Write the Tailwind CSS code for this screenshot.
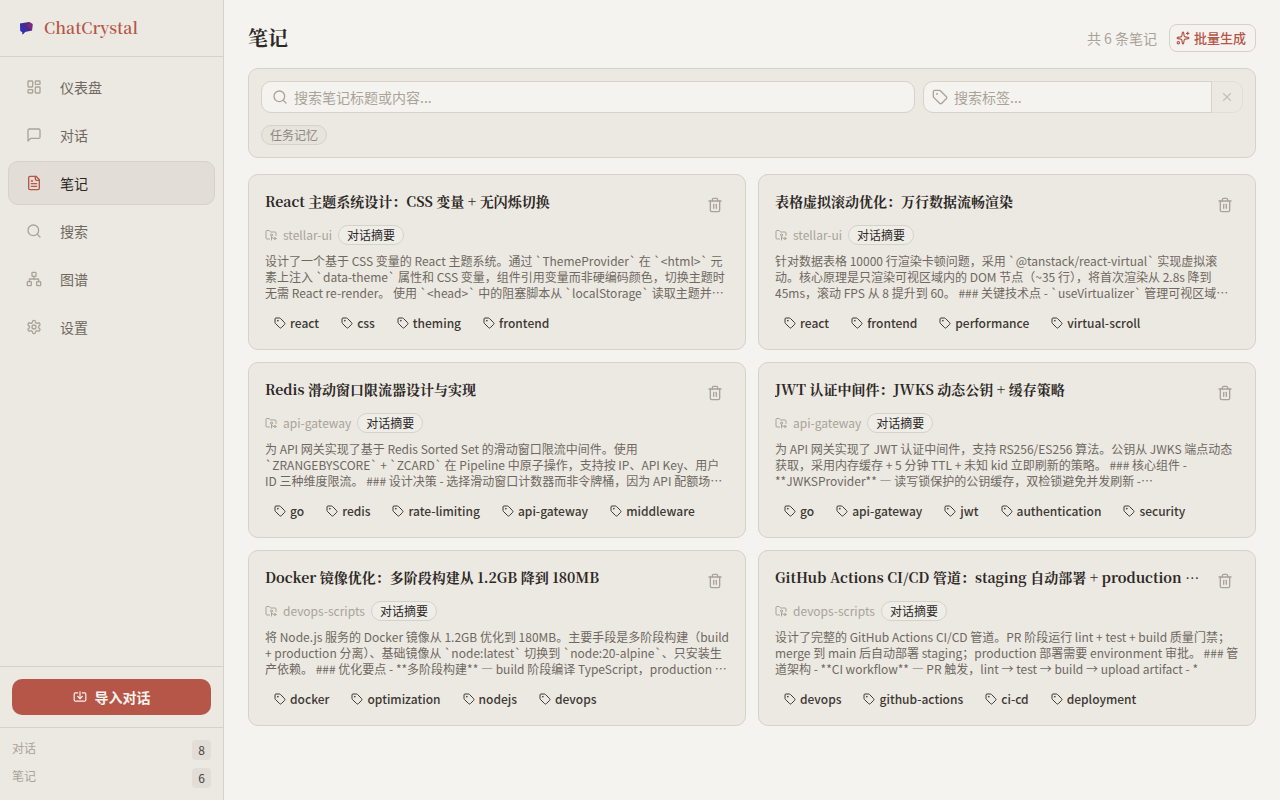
<!DOCTYPE html>
<html lang="zh-CN">
<head>
    <meta charset="UTF-8">
    <title>ChatCrystal</title>
    <script src="https://cdn.jsdelivr.net/npm/@tailwindcss/browser@4"></script>
</head>
<body class="bg-[#f5f3ef] text-[#2c2825] font-['Noto_Sans_CJK_SC','Noto_Sans',sans-serif]">
    <div class="flex h-[800px] w-[1280px] overflow-hidden">
        <!-- Sidebar -->
        <aside class="flex w-[224px] shrink-0 flex-col border-r border-[#d6d1c9] bg-[#ece9e3]">
            <div class="flex h-[57px] shrink-0 items-center gap-[10px] border-b border-[#d6d1c9] px-[18px]">
                <svg class="h-[16px] w-[16px]" viewBox="0 0 16 16">
                    <path d="M2 3.5 L11 2 L14.5 4 L14 10.5 L7 12 L4.5 14.5 L4.5 12 L2.5 11 Z" fill="#4a2a8c"/>
                    <path d="M2 3.5 L2.5 11 L4.5 12 L4.5 14.5 L7 12 L6.5 7 Z" fill="#2f2fb8"/>
                    <path d="M11 2 L14.5 4 L14 10.5 L9 6 Z" fill="#7a2a78"/>
                </svg>
                <span class="font-['Noto_Serif_CJK_SC','Liberation_Serif',serif] text-[16px] font-semibold text-[#b55648]">ChatCrystal</span>
            </div>
            <nav class="flex flex-1 flex-col gap-[4px] p-[8px]">
                <a class="flex h-[44px] items-center gap-[18px] rounded-[10px] border border-transparent px-[17px] text-[14px] text-[#6f6860]">
                    <svg class="h-[16px] w-[16px] text-[#a9a399]" viewBox="0 0 24 24" fill="none" stroke="currentColor" stroke-width="2" stroke-linecap="round" stroke-linejoin="round"><rect width="7" height="9" x="3" y="3" rx="1"/><rect width="7" height="5" x="14" y="3" rx="1"/><rect width="7" height="9" x="14" y="12" rx="1"/><rect width="7" height="5" x="3" y="16" rx="1"/></svg>
                    仪表盘
                </a>
                <a class="flex h-[44px] items-center gap-[18px] rounded-[10px] border border-transparent px-[17px] text-[14px] text-[#6f6860]">
                    <svg class="h-[16px] w-[16px] text-[#a9a399]" viewBox="0 0 24 24" fill="none" stroke="currentColor" stroke-width="2" stroke-linecap="round" stroke-linejoin="round"><path d="M21 15a2 2 0 0 1-2 2H7l-4 4V5a2 2 0 0 1 2-2h14a2 2 0 0 1 2 2z"/></svg>
                    对话
                </a>
                <a class="flex h-[44px] items-center gap-[18px] rounded-[10px] border border-[#d6d1c9] bg-[#e2ded7] px-[17px] text-[14px] text-[#2c2825]">
                    <svg class="h-[16px] w-[16px] text-[#b55648]" viewBox="0 0 24 24" fill="none" stroke="currentColor" stroke-width="2" stroke-linecap="round" stroke-linejoin="round"><path d="M15 2H6a2 2 0 0 0-2 2v16a2 2 0 0 0 2 2h12a2 2 0 0 0 2-2V7Z"/><path d="M14 2v4a2 2 0 0 0 2 2h4"/><path d="M10 9H8"/><path d="M16 13H8"/><path d="M16 17H8"/></svg>
                    笔记
                </a>
                <a class="flex h-[44px] items-center gap-[18px] rounded-[10px] border border-transparent px-[17px] text-[14px] text-[#6f6860]">
                    <svg class="h-[16px] w-[16px] text-[#a9a399]" viewBox="0 0 24 24" fill="none" stroke="currentColor" stroke-width="2" stroke-linecap="round" stroke-linejoin="round"><circle cx="11" cy="11" r="8"/><path d="m21 21-4.3-4.3"/></svg>
                    搜索
                </a>
                <a class="flex h-[44px] items-center gap-[18px] rounded-[10px] border border-transparent px-[17px] text-[14px] text-[#6f6860]">
                    <svg class="h-[16px] w-[16px] text-[#a9a399]" viewBox="0 0 24 24" fill="none" stroke="currentColor" stroke-width="2" stroke-linecap="round" stroke-linejoin="round"><rect x="16" y="16" width="6" height="6" rx="1"/><rect x="2" y="16" width="6" height="6" rx="1"/><rect x="9" y="2" width="6" height="6" rx="1"/><path d="M5 16v-3a1 1 0 0 1 1-1h12a1 1 0 0 1 1 1v3"/><path d="M12 12V8"/></svg>
                    图谱
                </a>
                <a class="flex h-[44px] items-center gap-[18px] rounded-[10px] border border-transparent px-[17px] text-[14px] text-[#6f6860]">
                    <svg class="h-[16px] w-[16px] text-[#a9a399]" viewBox="0 0 24 24" fill="none" stroke="currentColor" stroke-width="2" stroke-linecap="round" stroke-linejoin="round"><path d="M12.22 2h-.44a2 2 0 0 0-2 2v.18a2 2 0 0 1-1 1.73l-.43.25a2 2 0 0 1-2 0l-.15-.08a2 2 0 0 0-2.73.73l-.22.38a2 2 0 0 0 .73 2.73l.15.1a2 2 0 0 1 1 1.72v.51a2 2 0 0 1-1 1.74l-.15.09a2 2 0 0 0-.73 2.73l.22.38a2 2 0 0 0 2.73.73l.15-.08a2 2 0 0 1 2 0l.43.25a2 2 0 0 1 1 1.73V20a2 2 0 0 0 2 2h.44a2 2 0 0 0 2-2v-.18a2 2 0 0 1 1-1.73l.43-.25a2 2 0 0 1 2 0l.15.08a2 2 0 0 0 2.73-.73l.22-.39a2 2 0 0 0-.73-2.73l-.15-.08a2 2 0 0 1-1-1.74v-.5a2 2 0 0 1 1-1.74l.15-.09a2 2 0 0 0 .73-2.73l-.22-.38a2 2 0 0 0-2.73-.73l-.15.08a2 2 0 0 1-2 0l-.43-.25a2 2 0 0 1-1-1.73V4a2 2 0 0 0-2-2z"/><circle cx="12" cy="12" r="3"/></svg>
                    设置
                </a>
            </nav>
            <div class="border-t border-[#d6d1c9] p-[12px]">
                <button class="flex h-[36px] w-full items-center justify-center gap-[8px] rounded-[10px] bg-[#b55648] text-[14px] font-semibold text-[#f5f3ef]">
                    <svg class="h-[14px] w-[14px]" viewBox="0 0 24 24" fill="none" stroke="currentColor" stroke-width="2" stroke-linecap="round" stroke-linejoin="round"><path d="M12 3v12"/><path d="m8 11 4 4 4-4"/><path d="M8 5H4a2 2 0 0 0-2 2v10a2 2 0 0 0 2 2h16a2 2 0 0 0 2-2V7a2 2 0 0 0-2-2h-4"/></svg>
                    导入对话
                </button>
            </div>
            <div class="flex h-[73px] flex-col gap-[8px] border-t border-[#d6d1c9] px-[12px] pt-[12px] text-[12px] text-[#a9a399]">
                <div class="flex items-start justify-between">
                    <span class="leading-[16px]">对话</span>
                    <span class="flex h-[20px] w-[19px] items-center justify-center rounded-[4px] bg-[#e2ded7] text-[#4a443e]">8</span>
                </div>
                <div class="flex items-start justify-between">
                    <span class="leading-[16px]">笔记</span>
                    <span class="flex h-[20px] w-[19px] items-center justify-center rounded-[4px] bg-[#e2ded7] text-[#4a443e]">6</span>
                </div>
            </div>
        </aside>

        <!-- Main -->
        <main class="flex-1 px-[24px]">
            <header class="flex h-[68px] items-center justify-between pt-[8px]">
                <h1 class="font-['Noto_Serif_CJK_SC','Liberation_Serif','Noto_Sans_CJK_SC',serif] text-[20px] font-bold">笔记</h1>
                <div class="flex items-center gap-[12px]">
                    <span class="text-[14px] text-[#a9a399]">共 6 条笔记</span>
                    <button class="flex h-[28px] items-center gap-[4px] rounded-[8px] border border-[#d6d1c9] pl-[6px] pr-[9px] text-[13px] font-medium text-[#b55648]">
                        <svg class="h-[14px] w-[14px]" viewBox="0 0 24 24" fill="none" stroke="currentColor" stroke-width="2" stroke-linecap="round" stroke-linejoin="round"><path d="M11.017 2.814a1 1 0 0 1 1.966 0l1.051 5.558a2 2 0 0 0 1.594 1.594l5.558 1.051a1 1 0 0 1 0 1.966l-5.558 1.051a2 2 0 0 0-1.594 1.594l-1.051 5.558a1 1 0 0 1-1.966 0l-1.051-5.558a2 2 0 0 0-1.594-1.594l-5.558-1.051a1 1 0 0 1 0-1.966l5.558-1.051a2 2 0 0 0 1.594-1.594z"/><path d="M20 2v4"/><path d="M22 4h-4"/><circle cx="4" cy="20" r="2"/></svg>
                        批量生成
                    </button>
                </div>
            </header>

            <section class="flex h-[90px] flex-col gap-[12px] rounded-[10px] border border-[#d6d1c9] bg-[#ece9e3] px-[12px] pt-[12px]">
                <div class="flex gap-[8px]">
                    <div class="flex h-[32px] w-[654px] items-center gap-[6px] rounded-[10px] border border-[#d6d1c9] bg-[#f5f3ef] px-[10px]">
                        <svg class="h-[16px] w-[16px] text-[#a9a399]" viewBox="0 0 24 24" fill="none" stroke="currentColor" stroke-width="2" stroke-linecap="round" stroke-linejoin="round"><circle cx="11" cy="11" r="8"/><path d="m21 21-4.3-4.3"/></svg>
                        <span class="text-[14px] text-[#a9a399]">搜索笔记标题或内容...</span>
                    </div>
                    <div class="flex h-[32px] flex-1">
                        <div class="flex flex-1 items-center gap-[6px] rounded-l-[10px] border border-[#d6d1c9] bg-[#f5f3ef] px-[8px]">
                            <svg class="h-[16px] w-[16px] text-[#a9a399]" viewBox="0 0 24 24" fill="none" stroke="currentColor" stroke-width="2" stroke-linecap="round" stroke-linejoin="round"><path d="M12.586 2.586A2 2 0 0 0 11.172 2H4a2 2 0 0 0-2 2v7.172a2 2 0 0 0 .586 1.414l8.704 8.704a2.426 2.426 0 0 0 3.42 0l6.58-6.58a2.426 2.426 0 0 0 0-3.42z"/><circle cx="7.5" cy="7.5" r=".5" fill="currentColor"/></svg>
                            <span class="text-[14px] text-[#a9a399]">搜索标签...</span>
                        </div>
                        <div class="flex w-[31px] items-center justify-center rounded-r-[10px] border border-l-0 border-[#e2ded7]">
                            <svg class="h-[14px] w-[14px] text-[#c4bfb6]" viewBox="0 0 24 24" fill="none" stroke="currentColor" stroke-width="2" stroke-linecap="round" stroke-linejoin="round"><path d="M18 6 6 18"/><path d="m6 6 12 12"/></svg>
                        </div>
                    </div>
                </div>
                <div class="flex">
                    <span class="flex h-[20px] items-center rounded-full border border-[#d6d1c9] bg-[#e2ded7]/50 px-[8px] text-[12px] text-[#8f887e]">任务记忆</span>
                </div>
            </section>

            <div id="note-grid" class="mt-[16px] grid grid-cols-2 gap-[12px]"></div>
        </main>
    </div>

    <script>
        const notes = [
            {
                title: 'React 主题系统设计：CSS 变量 + 无闪烁切换',
                project: 'stellar-ui',
                summary: '设计了一个基于 CSS 变量的 React 主题系统。通过 `ThemeProvider` 在 `&lt;html&gt;` 元素上注入 `data-theme` 属性和 CSS 变量，组件引用变量而非硬编码颜色，切换主题时无需 React re-render。 使用 `&lt;head&gt;` 中的阻塞脚本从 `localStorage` 读取主题并在首次渲染前应用，避免页面闪烁。',
                tags: ['react', 'css', 'theming', 'frontend']
            },
            {
                title: '表格虚拟滚动优化：万行数据流畅渲染',
                project: 'stellar-ui',
                summary: '针对数据表格 10000 行渲染卡顿问题，采用 `@tanstack/react-virtual` 实现虚拟滚动。核心原理是只渲染可视区域内的 DOM 节点（~35 行），将首次渲染从 2.8s 降到 45ms，滚动 FPS 从 8 提升到 60。 ### 关键技术点 - `useVirtualizer` 管理可视区域并计算偏移量，保证滚动定位准确无误。',
                tags: ['react', 'frontend', 'performance', 'virtual-scroll']
            },
            {
                title: 'Redis 滑动窗口限流器设计与实现',
                project: 'api-gateway',
                summary: '为 API 网关实现了基于 Redis Sorted Set 的滑动窗口限流中间件。使用 `ZRANGEBYSCORE` + `ZCARD` 在 Pipeline 中原子操作，支持按 IP、API Key、用户 ID 三种维度限流。 ### 设计决策 - 选择滑动窗口计数器而非令牌桶，因为 API 配额场景需要更精确的窗口统计结果。',
                tags: ['go', 'redis', 'rate-limiting', 'api-gateway', 'middleware']
            },
            {
                title: 'JWT 认证中间件：JWKS 动态公钥 + 缓存策略',
                project: 'api-gateway',
                summary: '为 API 网关实现了 JWT 认证中间件，支持 RS256/ES256 算法。公钥从 JWKS 端点动态获取，采用内存缓存 + 5 分钟 TTL + 未知 kid 立即刷新的策略。 ### 核心组件 - **JWKSProvider** — 读写锁保护的公钥缓存，双检锁避免并发刷新 - **JWTAuthenticationMiddleware** — 校验签名并注入用户上下文。',
                tags: ['go', 'api-gateway', 'jwt', 'authentication', 'security']
            },
            {
                title: 'Docker 镜像优化：多阶段构建从 1.2GB 降到 180MB',
                project: 'devops-scripts',
                summary: '将 Node.js 服务的 Docker 镜像从 1.2GB 优化到 180MB。主要手段是多阶段构建（build + production 分离）、基础镜像从 `node:latest` 切换到 `node:20-alpine`、只安装生产依赖。 ### 优化要点 - **多阶段构建** — build 阶段编译 TypeScript，production 阶段只复制编译产物和生产依赖。',
                tags: ['docker', 'optimization', 'nodejs', 'devops']
            },
            {
                title: 'GitHub Actions CI/CD 管道：staging 自动部署 + production 审批流程',
                project: 'devops-scripts',
                summary: '设计了完整的 GitHub Actions CI/CD 管道。PR 阶段运行 lint + test + build 质量门禁；merge 到 main 后自动部署 staging；production 部署需要 environment 审批。 ### 管道架构 - **CI workflow** — PR 触发，lint → test → build → upload artifact - *',
                tags: ['devops', 'github-actions', 'ci-cd', 'deployment']
            }
        ];

        const tagIcon = `<svg class="h-[12px] w-[12px]" viewBox="0 0 24 24" fill="none" stroke="currentColor" stroke-width="2" stroke-linecap="round" stroke-linejoin="round"><path d="M12.586 2.586A2 2 0 0 0 11.172 2H4a2 2 0 0 0-2 2v7.172a2 2 0 0 0 .586 1.414l8.704 8.704a2.426 2.426 0 0 0 3.42 0l6.58-6.58a2.426 2.426 0 0 0 0-3.42z"/><circle cx="7.5" cy="7.5" r=".5" fill="currentColor"/></svg>`;

        function renderCard(note) {
            const tags = note.tags.map(t => `<span class="flex items-center gap-[4px] pl-[9px] pr-[8px] text-[12px] font-medium text-[#3d3832]">${tagIcon}${t}</span>`).join('<span class="w-[5px]"></span>');
            return `
                <article class="flex h-[176px] flex-col rounded-[10px] border border-[#d6d1c9] bg-[#ece9e3] px-[16px] pt-[16px]">
                    <div class="flex items-start justify-between gap-[12px]">
                        <h2 class="truncate font-['Noto_Serif_CJK_SC','Liberation_Serif','Noto_Sans_CJK_SC',serif] text-[14px] leading-[20px] font-bold">${note.title}</h2>
                        <svg class="mr-[6px] mt-[6px] h-[16px] w-[16px] shrink-0 text-[#a9a399]" viewBox="0 0 24 24" fill="none" stroke="currentColor" stroke-width="2" stroke-linecap="round" stroke-linejoin="round"><path d="M3 6h18"/><path d="M19 6v14c0 1-1 2-2 2H7c-1 0-2-1-2-2V6"/><path d="M8 6V4c0-1 1-2 2-2h4c1 0 2 1 2 2v2"/><line x1="10" x2="10" y1="11" y2="17"/><line x1="14" x2="14" y1="11" y2="17"/></svg>
                    </div>
                    <div class="mt-[12px] flex items-center gap-[6px] text-[12px] text-[#a9a399]">
                        <svg class="h-[12px] w-[12px]" viewBox="0 0 24 24" fill="none" stroke="currentColor" stroke-width="2" stroke-linecap="round" stroke-linejoin="round"><path d="M9 20H4a2 2 0 0 1-2-2V5a2 2 0 0 1 2-2h3.9a2 2 0 0 1 1.69.9l.81 1.2a2 2 0 0 0 1.67.9H20a2 2 0 0 1 2 2v5"/><circle cx="13" cy="12" r="2"/><path d="M18 19c-2.8 0-5-2.2-5-5v8"/><circle cx="20" cy="19" r="2"/></svg>
                        <span>${note.project}</span>
                        <span class="flex h-[20px] items-center rounded-full border border-[#d6d1c9] bg-[#f5f3ef]/40 px-[8px] text-[#2c2825]">对话摘要</span>
                    </div>
                    <p class="-mr-[1px] mt-[8px] line-clamp-3 text-[12px] leading-[16px] text-[#6f6860]">${note.summary}</p>
                    <div class="mt-[13px] flex">${tags}</div>
                </article>`;
        }

        document.getElementById('note-grid').innerHTML = notes.map(renderCard).join('');
    </script>
</body>
</html>
